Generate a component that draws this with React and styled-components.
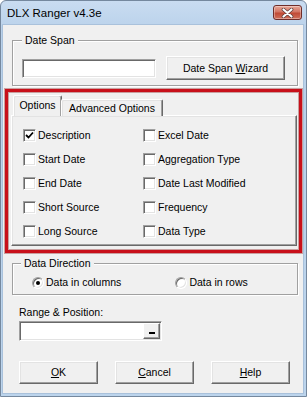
import React from 'react'
import styled, { createGlobalStyle } from 'styled-components'

const GlobalStyle = createGlobalStyle`
  html, body {
    margin: 0;
    padding: 0;
    background: #ffffff;
  }
  body {
    font-family: 'Liberation Sans', Arial, sans-serif;
    font-size: 10.5px;
    color: #000;
  }
`

const Window = styled.div`
  width: 307px;
  height: 397px;
  box-sizing: border-box;
  background: linear-gradient(#c9dcf1, #b9d1ea 30px, #bcd4ec);
  border: 1px solid #75889e;
  border-radius: 6px 6px 0 0;
  display: flex;
  flex-direction: column;
  overflow: hidden;
`

const TitleBar = styled.div`
  height: 24px;
  display: flex;
  align-items: flex-start;
  padding-left: 6px;
`

const Title = styled.div`
  font-size: 11.5px;
  line-height: 24px;
`

const CloseButton = styled.div`
  margin: 4px 4px 0 auto;
  width: 29px;
  height: 15px;
  box-sizing: border-box;
  border: 1px solid #6e2d2a;
  border-radius: 3px;
  background: linear-gradient(#e8a899, #d27463 45%, #c04a36 55%, #d0705c);
  display: flex;
  align-items: center;
  justify-content: center;
  box-shadow: inset 0 0 0 1px rgba(255, 255, 255, 0.35);
`

const Body = styled.div`
  flex: 1;
  margin: 0 3px 3px 2px;
  background: #f0f0f0;
  box-shadow: 0 0 0 1px #a9c1db;
  display: flex;
  flex-direction: column;
`

const GroupBox = styled.div`
  margin: ${p => p.$top}px 5px 0 9px;
  border: 1px solid #a0a0a0;
  box-shadow: 1px 1px 0 #fff, inset 1px 1px 0 #fff;
  padding: 0 12px ${p => p.$bottom}px ${p => p.$left}px;
`

const GroupTitle = styled.div`
  width: fit-content;
  margin: -7px 0 ${p => p.$gap}px ${p => p.$indent}px;
  padding: 0 3px;
  line-height: 13px;
  background: #f0f0f0;
`

const SpanRow = styled.div`
  display: flex;
  align-items: center;
  justify-content: space-between;
`

const TextBox = styled.div`
  width: ${p => p.$w}px;
  height: ${p => p.$h}px;
  box-sizing: border-box;
  background: #fff;
  border: 1px solid;
  border-color: #a0a0a0 #fff #fff #a0a0a0;
  box-shadow: inset 1px 1px 0 #696969, inset -1px -1px 0 #e3e3e3;
  display: flex;
  justify-content: flex-end;
  padding: 1px;
`

const Button = styled.div`
  width: ${p => p.$w}px;
  height: ${p => p.$h}px;
  box-sizing: border-box;
  background: #f0f0f0;
  border: 1px solid;
  border-color: #fff #696969 #696969 #fff;
  box-shadow: inset -1px -1px 0 #a0a0a0, inset 1px 1px 0 #e3e3e3;
  display: flex;
  align-items: center;
  justify-content: center;
  line-height: 13px;
  u {
    text-decoration: underline;
    text-underline-offset: 1px;
  }
`

const Highlight = styled.div`
  margin: 3px 1px 0 2px;
  border: 3px solid #c8101a;
  box-shadow: 0 0 0 1px rgba(130, 10, 10, 0.35), inset 0 0 0 1px rgba(130, 10, 10, 0.35);
  padding: 4px 2px 4px 3px;
`

const TabStrip = styled.div`
  height: 20px;
  display: flex;
  align-items: flex-end;
  padding-left: 2px;
  position: relative;
  z-index: 1;
  margin-bottom: -1px;
`

const Tab = styled.div`
  height: ${p => (p.$active ? 21 : 17)}px;
  width: ${p => p.$w}px;
  box-sizing: border-box;
  background: #f0f0f0;
  border: 1px solid;
  border-bottom: none;
  border-color: #fff #696969 transparent #fff;
  border-radius: 2px 2px 0 0;
  box-shadow: inset -1px 0 0 #a0a0a0, inset 1px 1px 0 #e3e3e3;
  display: flex;
  justify-content: center;
  padding-top: ${p => (p.$active ? 3 : 2)}px;
  line-height: 13px;
  margin-left: ${p => (p.$active ? 0 : -1)}px;
`

const TabPanel = styled.div`
  border: 1px solid;
  border-color: #fff #696969 #696969 #fff;
  box-shadow: inset -1px -1px 0 #a0a0a0, inset 1px 1px 0 #e3e3e3;
  padding: 7px 0 2px 11px;
  display: grid;
  grid-template-columns: 120px 1fr;
  grid-template-rows: repeat(5, 24px);
  grid-auto-flow: column;
`

const CheckRow = styled.label`
  display: flex;
  align-items: center;
  gap: 2px;
  line-height: 13px;
`

const Box = styled.span`
  width: 13px;
  height: 13px;
  box-sizing: border-box;
  background: #fff;
  border: 1px solid;
  border-color: #a0a0a0 #fff #fff #a0a0a0;
  box-shadow: inset 1px 1px 0 #696969, inset -1px -1px 0 #e3e3e3;
  display: flex;
  align-items: center;
  justify-content: center;
  flex: none;
`

const RadioRow = styled.div`
  display: flex;
`

const RadioLabel = styled.label`
  width: ${p => p.$w}px;
  display: flex;
  align-items: center;
  gap: 2px;
  line-height: 13px;
`

const RadioDot = styled.span`
  width: 12px;
  height: 12px;
  box-sizing: border-box;
  border-radius: 50%;
  background: #fff;
  border: 1px solid;
  border-color: #a0a0a0 #fff #fff #a0a0a0;
  box-shadow: inset 1px 1px 0 #696969, inset -1px -1px 0 #e3e3e3;
  display: flex;
  align-items: center;
  justify-content: center;
  flex: none;
  &::after {
    content: '';
    width: 4px;
    height: 4px;
    border-radius: 50%;
    background: ${p => (p.$on ? '#000' : 'transparent')};
  }
`

const FieldLabel = styled.div`
  margin: 11px 0 2px 16px;
  line-height: 13px;
`

const RefEdit = styled(TextBox)`
  margin-left: 16px;
`

const RefButton = styled.div`
  width: 17px;
  height: 100%;
  box-sizing: border-box;
  background: #f0f0f0;
  border: 1px solid;
  border-color: #fff #696969 #696969 #fff;
  box-shadow: inset -1px -1px 0 #a0a0a0;
  display: flex;
  align-items: flex-end;
  justify-content: center;
  padding-bottom: 4px;
  &::after {
    content: '';
    width: 6px;
    height: 2px;
    background: #000;
  }
`

const ButtonRow = styled.div`
  margin: 20px 0 0 16px;
  display: flex;
  gap: 17px;
`

const CloseIcon = () => (
  <svg width="13" height="10" viewBox="0 0 13 10">
    <path d="M2.5 1.5 L10.5 8.5 M10.5 1.5 L2.5 8.5" stroke="#5a3a38" strokeWidth="3.6" strokeLinecap="round" />
    <path d="M2.5 1.5 L10.5 8.5 M10.5 1.5 L2.5 8.5" stroke="#ffffff" strokeWidth="2.2" strokeLinecap="round" />
  </svg>
)

const Check = () => (
  <svg width="9" height="9" viewBox="0 0 9 9">
    <path d="M1 4 L3.5 6.5 L8 1.5" fill="none" stroke="#000" strokeWidth="1.8" />
  </svg>
)

const options = [
  { label: 'Description', checked: true },
  { label: 'Start Date' },
  { label: 'End Date' },
  { label: 'Short Source' },
  { label: 'Long Source' },
  { label: 'Excel Date' },
  { label: 'Aggregation Type' },
  { label: 'Date Last Modified' },
  { label: 'Frequency' },
  { label: 'Data Type' }
]

const App = () => (
  <>
    <GlobalStyle />
    <Window>
      <TitleBar>
        <Title>DLX Ranger v4.3e</Title>
        <CloseButton><CloseIcon /></CloseButton>
      </TitleBar>
      <Body>
        <GroupBox $top={15} $bottom={5} $left={9}>
          <GroupTitle $gap={9} $indent={0}>Date Span</GroupTitle>
          <SpanRow>
            <TextBox $w={134} $h={19} />
            <Button $w={119} $h={24}>Date Span&nbsp;<u>W</u>izard</Button>
          </SpanRow>
        </GroupBox>

        <Highlight>
          <TabStrip>
            <Tab $active $w={49}>Options</Tab>
            <Tab $w={102}>Advanced Options</Tab>
          </TabStrip>
          <TabPanel>
            {options.map(o => (
              <CheckRow key={o.label}>
                <Box>{o.checked && <Check />}</Box>
                {o.label}
              </CheckRow>
            ))}
          </TabPanel>
        </Highlight>

        <GroupBox $top={10} $bottom={5} $left={19}>
          <GroupTitle $gap={6} $indent={-11}>Data Direction</GroupTitle>
          <RadioRow>
            <RadioLabel $w={144}><RadioDot $on />Data in columns</RadioLabel>
            <RadioLabel $w={110}><RadioDot />Data in rows</RadioLabel>
          </RadioRow>
        </GroupBox>

        <FieldLabel>Range &amp; Position:</FieldLabel>
        <RefEdit $w={143} $h={20}>
          <RefButton />
        </RefEdit>

        <ButtonRow>
          <Button $w={79} $h={23}><u>O</u>K</Button>
          <Button $w={79} $h={23}><u>C</u>ancel</Button>
          <Button $w={79} $h={23}><u>H</u>elp</Button>
        </ButtonRow>
      </Body>
    </Window>
  </>
)

export default App
